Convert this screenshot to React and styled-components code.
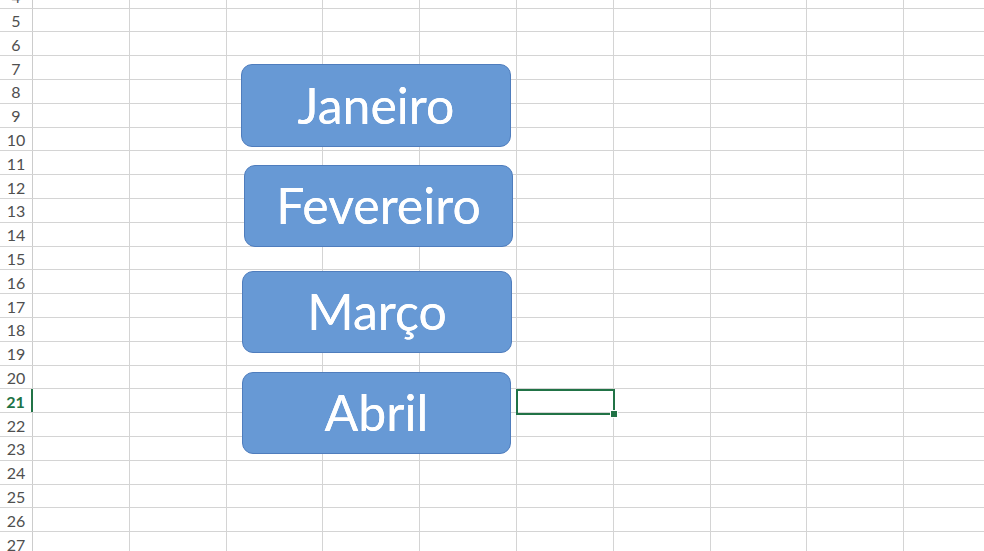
import React from "react";
import styled, { createGlobalStyle } from "styled-components";

const rows = Array.from({ length: 24 }, (_, i) => i + 4);
const columnCount = 10;
const activeRow = 21;

const shapes = [
  { label: "Janeiro", left: 241, top: 64, width: 270, height: 83 },
  { label: "Fevereiro", left: 244, top: 165, width: 269, height: 82 },
  { label: "Março", left: 242, top: 271, width: 270, height: 82 },
  { label: "Abril", left: 242, top: 372, width: 269, height: 82 },
];

export default function App() {
  return (
    <>
      <GlobalStyle />
      <Canvas>
        <Sheet>
          {rows.map((row) => (
            <Row key={row}>
              <RowHeader $active={row === activeRow}>{row}</RowHeader>
              {Array.from({ length: columnCount }, (_, c) => (
                <Cell key={c} />
              ))}
            </Row>
          ))}
        </Sheet>

        {shapes.map((s) => (
          <Shape
            key={s.label}
            style={{ left: s.left, top: s.top, width: s.width, height: s.height }}
          >
            {s.label}
          </Shape>
        ))}

        <Selection>
          <FillHandle />
        </Selection>
      </Canvas>
    </>
  );
}

const GlobalStyle = createGlobalStyle`
  html, body {
    margin: 0;
    padding: 0;
    background: #ffffff;
    overflow: hidden;
  }
  body {
    font-family: Lato, "Open Sans", sans-serif;
  }
`;

const Canvas = styled.div`
  position: relative;
  width: 984px;
  height: 551px;
  overflow: hidden;
  background: #ffffff;
`;

const Sheet = styled.div`
  display: flex;
  flex-direction: column;
  margin-top: -15.2px;
`;

const Row = styled.div`
  display: grid;
  grid-template-columns: 33px repeat(10, 96.8px);
  height: 23.8px;
  flex-shrink: 0;
  border-bottom: 1px solid #d4d4d4;
  box-sizing: border-box;
`;

const RowHeader = styled.div`
  display: flex;
  align-items: center;
  justify-content: center;
  padding-top: 1px;
  font-family: Lato, "Open Sans", sans-serif;
  font-size: 16px;
  font-weight: ${(p) => (p.$active ? 700 : 400)};
  color: ${(p) => (p.$active ? "#217346" : "#4f4f4f")};
  border-right: ${(p) => (p.$active ? "2px solid #217346" : "1px solid #cccccc")};
  box-sizing: border-box;
`;

const Cell = styled.div`
  border-right: 1px solid #d4d4d4;
  box-sizing: border-box;
`;

const Shape = styled.div`
  position: absolute;
  box-sizing: border-box;
  display: flex;
  align-items: center;
  justify-content: center;
  background: #6799d5;
  border: 1.5px solid #4f7dbd;
  border-radius: 11px;
  color: #ffffff;
  font-family: Lato, "Open Sans", sans-serif;
  font-size: 50px;
  padding-bottom: 2px;
  text-shadow: 0 0 0.6px #ffffff;
`;

const Selection = styled.div`
  position: absolute;
  left: 516px;
  top: 389px;
  width: 99px;
  height: 26px;
  box-sizing: border-box;
  border: 2px solid #217346;
`;

const FillHandle = styled.div`
  position: absolute;
  right: -5px;
  bottom: -5px;
  width: 6px;
  height: 6px;
  background: #217346;
  border: 1px solid #ffffff;
`;
